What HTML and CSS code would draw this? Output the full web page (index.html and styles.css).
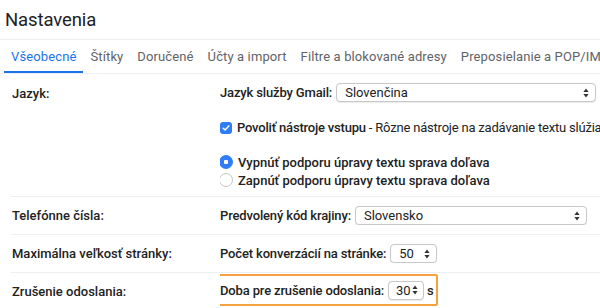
FILE: index.html
```html
<!DOCTYPE html>
<html lang="sk">
<head>
<meta charset="utf-8">
<title>Nastavenia</title>
<link rel="stylesheet" href="styles.css">
</head>
<body>
<div class="page">
  <header class="header">
    <h1 class="title">Nastavenia</h1>
  </header>
  <nav class="tabs">
    <span class="tab active">Všeobecné</span>
    <span class="tab">Štítky</span>
    <span class="tab">Doručené</span>
    <span class="tab">Účty a import</span>
    <span class="tab">Filtre a blokované adresy</span>
    <span class="tab">Preposielanie a POP/IMA</span>
  </nav>
  <div class="rows">
    <div class="row row-lang">
      <div class="label">Jazyk:</div>
      <div class="content stack">
        <div class="line">
          <span class="strong field">Jazyk služby Gmail:</span>
          <div class="select select-lang"><span>Slovenčina</span><svg class="arrows" width="6" height="10" viewBox="0 0 6 10"><path d="M3 0.5 L5.6 4 L0.4 4 Z M3 9.5 L5.6 6 L0.4 6 Z" fill="#333"/></svg></div>
        </div>
        <div class="line check-line">
          <span class="checkbox"><svg width="12" height="12" viewBox="0 0 12 12"><path d="M3.2 6.2 L5.1 8 L8.8 3.9" fill="none" stroke="#fff" stroke-width="1.5" stroke-linecap="round" stroke-linejoin="round"/></svg></span>
          <span class="nowrap tight"><span class="strong">Povoliť nástroje vstupu</span> - Rôzne nástroje na zadávanie textu slúžia</span>
        </div>
        <div class="radios">
          <div class="line radio-line"><span class="radio on"></span><span class="strong">Vypnúť podporu úpravy textu sprava doľava</span></div>
          <div class="line radio-line"><span class="radio"></span><span class="strong">Zapnúť podporu úpravy textu sprava doľava</span></div>
        </div>
      </div>
    </div>
    <div class="row">
      <div class="label">Telefónne čísla:</div>
      <div class="content">
        <div class="line">
          <span class="strong field">Predvolený kód krajiny:</span>
          <div class="select select-country"><span>Slovensko</span><svg class="arrows" width="6" height="10" viewBox="0 0 6 10"><path d="M3 0.5 L5.6 4 L0.4 4 Z M3 9.5 L5.6 6 L0.4 6 Z" fill="#333"/></svg></div>
        </div>
      </div>
    </div>
    <div class="row">
      <div class="label">Maximálna veľkosť stránky:</div>
      <div class="content">
        <div class="line">
          <span class="strong field">Počet konverzácií na stránke:</span>
          <div class="select select-50"><span>50</span><svg class="arrows" width="6" height="10" viewBox="0 0 6 10"><path d="M3 0.5 L5.6 4 L0.4 4 Z M3 9.5 L5.6 6 L0.4 6 Z" fill="#333"/></svg></div>
        </div>
      </div>
    </div>
    <div class="row row-last">
      <div class="label">Zrušenie odoslania:</div>
      <div class="content">
        <div class="highlight line">
          <span class="strong field">Doba pre zrušenie odoslania:</span>
          <div class="select select-30"><span>30</span><svg class="arrows" width="6" height="10" viewBox="0 0 6 10"><path d="M3 0.5 L5.6 4 L0.4 4 Z M3 9.5 L5.6 6 L0.4 6 Z" fill="#333"/></svg></div>
          <span class="strong unit">s</span>
        </div>
      </div>
    </div>
  </div>
</div>
</body>
</html>
```

FILE: styles.css
```css
html, body {
  margin: 0;
  padding: 0;
  background: #fff;
}
body {
  width: 600px;
  height: 308px;
  overflow: hidden;
  font-family: Roboto, "Liberation Sans", Arial, sans-serif;
  color: #222;
  font-size: 13px;
}
.page {
  display: flex;
  flex-direction: column;
}
.header {
  height: 39px;
  border-bottom: 1px solid #eceff1;
  display: flex;
  align-items: center;
  padding-left: 5px;
}
.title {
  margin: 0;
  font-size: 18.5px;
  font-weight: 400;
  color: #202124;
  letter-spacing: -0.1px;
}
.tabs {
  display: flex;
  height: 33px;
  padding-left: 5px;
  border-bottom: 1px solid #eceff1;
  white-space: nowrap;
  overflow: hidden;
}
.tab {
  padding: 2px 7px 0 7px;
  font-size: 13px;
  color: #5f6368;
  display: flex;
  align-items: center;
  border-bottom: 2px solid transparent;
  letter-spacing: 0.12px;
}
.tab.active {
  color: #1a73e8;
  border-bottom-color: #1a73e8;
  padding-left: 7px;
  margin-left: -1px;
  padding-right: 7px;
}
.rows {
  margin-left: 11px;
  display: flex;
  flex-direction: column;
}
.row {
  display: flex;
  border-bottom: 1px solid #eceff1;
  height: 37px;
  align-items: center;
}
.row-lang {
  height: 122px;
  align-items: flex-start;
}
.row-last {
  border-bottom: none;
  height: 35px;
  align-items: flex-start;
}
.label {
  width: 208px;
  padding-left: 1px;
  font-weight: 500;
  color: #222;
  flex: none;
}
.row-lang .label {
  padding-top: 12px;
}
.row-last .label {
  padding-top: 11px;
}
.content {
  flex: 1;
  min-width: 0;
  overflow: hidden;
}
.stack {
  display: flex;
  flex-direction: column;
  padding-top: 9px;
}
.line {
  display: flex;
  align-items: center;
  gap: 4px;
  white-space: nowrap;
}
.strong {
  font-weight: 500;
  color: #222;
}
.field {
  letter-spacing: -0.15px;
}
.nowrap {
  white-space: nowrap;
}
.tight {
  letter-spacing: -0.2px;
}
.select {
  display: flex;
  align-items: center;
  justify-content: space-between;
  height: 19px;
  padding: 0 6px 0 8px;
  border: 1px solid #c8c8c8;
  border-radius: 4px;
  background: #fff;
  box-shadow: 0 0.5px 1px rgba(0,0,0,0.08);
  font-weight: 400;
  color: #222;
  box-sizing: border-box;
  flex: none;
}
.select-lang {
  flex: 1;
  margin-right: 4px;
}
.select-country {
  width: 232px;
}
.select-50 {
  width: 47px;
}
.select-30 {
  width: 36px;
  padding-left: 7px;
  padding-right: 5px;
}
.arrows {
  display: block;
  flex: none;
}
.check-line {
  margin-top: 18px;
  gap: 5px;
}
.checkbox {
  width: 12px;
  height: 12px;
  border-radius: 3px;
  background: #2f7df6;
  display: flex;
  flex: none;
}
.radios {
  margin-top: 18px;
  display: flex;
  flex-direction: column;
}
.radio-line {
  height: 18px;
  gap: 5px;
  margin-left: -1px;
}
.radio {
  width: 12px;
  height: 12px;
  border-radius: 50%;
  border: 1px solid #c4c4c4;
  background: #fff;
  flex: none;
  box-sizing: content-box;
}
.radio.on {
  border-color: #2f7df6;
  background: radial-gradient(circle, #fff 0 2px, #2f7df6 2.5px);
}
.highlight {
  margin-left: -7px;
  margin-top: 1px;
  width: 225px;
  height: 32px;
  box-sizing: border-box;
  padding-left: 5px;
  border: 2px solid #f6a23e;
  border-radius: 2px;
  gap: 4px;
}
.unit {
  margin-left: -1px;
}
```
